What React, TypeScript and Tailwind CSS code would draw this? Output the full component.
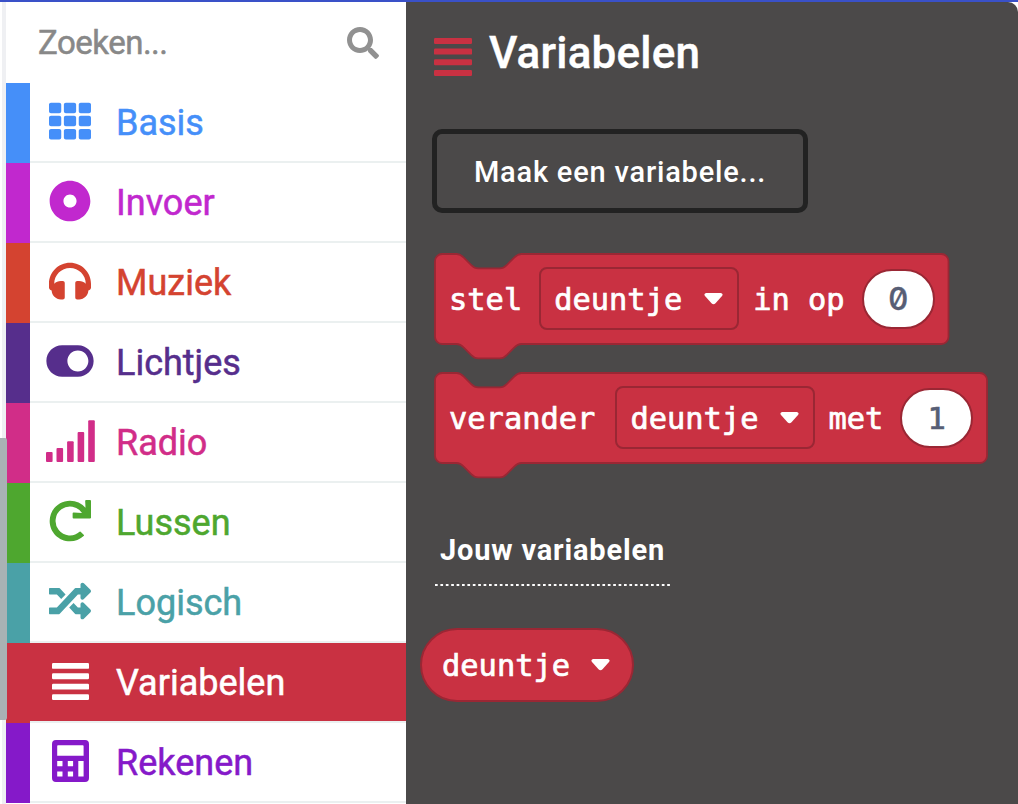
import type { ReactNode } from 'react';
import { FaDotCircle, FaRandom, FaRedo, FaSearch, FaTh, FaToggleOn } from 'react-icons/fa';

function BarsIcon({ className }: { className: string }) {
  return (
    <svg viewBox="0 0 38 38" className={className} fill="currentColor">
      <rect x="0" y="0" width="38" height="6" rx="1.2" />
      <rect x="0" y="10.6" width="38" height="6" rx="1.2" />
      <rect x="0" y="21.3" width="38" height="6" rx="1.2" />
      <rect x="0" y="32" width="38" height="6" rx="1.2" />
    </svg>
  );
}

function CalculatorIcon() {
  return (
    <svg viewBox="0 0 37 42" className="h-[42px] w-[37px]" fill="currentColor" fillRule="evenodd">
      <path d="M4 0H33a4 4 0 0 1 4 4V38a4 4 0 0 1-4 4H4a4 4 0 0 1-4-4V4a4 4 0 0 1 4-4ZM6 5.2a.8.8 0 0 0-.8.8V15.8h26.4V6a.8.8 0 0 0-.8-.8ZM5.2 21v5.3h5.3V21ZM15.8 21v5.3h5.3V21ZM26.3 21v15.6h5.3V21ZM5.2 31.5v5.1h5.3v-5.1ZM15.8 31.5v5.1h5.3v-5.1Z" />
    </svg>
  );
}

function HeadphonesIcon() {
  return (
    <svg viewBox="0 0 512 512" className="size-[42px]" fill="currentColor">
      <path d="M256 32C114.52 32 0 146.497 0 288v48a32 32 0 0 0 17.689 28.622l14.383 7.191C34.083 431.903 83.421 480 144 480h24c13.255 0 24-10.745 24-24V280c0-13.255-10.745-24-24-24h-24c-31.342 0-59.671 12.879-80 33.627V288c0-105.869 86.131-192 192-192s192 86.131 192 192v1.627C427.671 268.879 399.342 256 368 256h-24c-13.255 0-24 10.745-24 24v176c0 13.255 10.745 24 24 24h24c60.579 0 109.917-48.098 111.928-108.187l14.382-7.191A32 32 0 0 0 512 336v-48c0-141.479-114.496-256-256-256z" />
    </svg>
  );
}

function SignalIcon() {
  return (
    <svg viewBox="0 0 49 42" className="h-[42px] w-[49px]" fill="currentColor">
      <rect x="0" y="32" width="6.6" height="10" rx="1" />
      <rect x="10.5" y="28" width="6.6" height="14" rx="1" />
      <rect x="21.1" y="21.3" width="6.6" height="20.7" rx="1" />
      <rect x="31.6" y="12" width="6.6" height="30" rx="1" />
      <rect x="42.2" y="0.3" width="6.6" height="41.7" rx="1" />
    </svg>
  );
}

type Category = { name: string; bar: string; text: string; icon: ReactNode };

const categories: Category[] = [
  { name: 'Basis', bar: 'bg-[#458ff9]', text: 'text-[#458ff9]', icon: <FaTh className="size-[42px]" /> },
  { name: 'Invoer', bar: 'bg-[#c128ce]', text: 'text-[#c128ce]', icon: <FaDotCircle className="size-[42px]" /> },
  { name: 'Muziek', bar: 'bg-[#d44330]', text: 'text-[#d44330]', icon: <HeadphonesIcon /> },
  { name: 'Lichtjes', bar: 'bg-[#562e8c]', text: 'text-[#562e8c]', icon: <FaToggleOn className="h-[42px] w-[48px]" /> },
  { name: 'Radio', bar: 'bg-[#d12d88]', text: 'text-[#d12d88]', icon: <SignalIcon /> },
  { name: 'Lussen', bar: 'bg-[#4ea72f]', text: 'text-[#4ea72f]', icon: <FaRedo className="size-[42px]" /> },
  { name: 'Logisch', bar: 'bg-[#4aa1a7]', text: 'text-[#4aa1a7]', icon: <FaRandom className="size-[42px]" /> },
  { name: 'Variabelen', bar: 'bg-[#c93142]', text: 'bg-[#c93142] text-white', icon: <BarsIcon className="size-[37px]" /> },
  { name: 'Rekenen', bar: 'bg-[#8519c9]', text: 'text-[#8519c9]', icon: <CalculatorIcon /> },
];

function Arrow({ className }: { className: string }) {
  return (
    <svg viewBox="0 0 19 12" className={`h-[12px] w-[19px] shrink-0 ${className}`}>
      <path d="M2 0H17Q19.6 0.8 18 3L11.5 10.2Q9.5 12.2 7.5 10.2L1 3Q-0.6 0.8 2 0Z" fill="#fff" />
    </svg>
  );
}

function Word({ children, className = '' }: { children: ReactNode; className?: string }) {
  return (
    <span className={`mt-[2px] shrink-0 whitespace-pre font-['DejaVu_Sans_Mono',monospace] text-[30.4px] leading-[36px] text-white [-webkit-text-stroke:0.7px_white] ${className}`}>
      {children}
    </span>
  );
}

function Dropdown({ name }: { name: string }) {
  return (
    <div className="mb-[1px] flex h-[63px] w-[200px] shrink-0 items-center rounded-[8px] border-2 border-[#9a2734] pl-[13px]">
      <Word>{name}</Word>
      <Arrow className="ml-[21.5px] mt-[1px]" />
    </div>
  );
}

function NumberField({ value }: { value: string }) {
  return (
    <div className="flex h-[60px] w-[73px] shrink-0 items-center justify-center rounded-full border-2 border-[#9a2734] bg-white">
      {value === '0' ? (
        <span className="font-['Inter',sans-serif] text-[31px] font-medium leading-[36px] text-[#575e75] slashed-zero [-webkit-text-stroke:0.3px_#575e75]">0</span>
      ) : (
        <span className="mt-[1px] font-['DejaVu_Sans_Mono',monospace] text-[30.4px] leading-[36px] text-[#575e75] [-webkit-text-stroke:0.7px_#575e75]">{value}</span>
      )}
    </div>
  );
}

const NOTCH_RIGHT = 'c2 0 3 1 4 2l4 4c1 1 2 2 4 2h12c2 0 3 -1 4 -2l4 -4c1 -1 2 -2 4 -2';
const NOTCH_LEFT = 'c-2 0 -3 1 -4 2l-4 4c-1 1 -2 2 -4 2h-12c-2 0 -3 -1 -4 -2l-4 -4c-1 -1 -2 -2 -4 -2';

function StatementBlock({ width, children }: { width: number; children: ReactNode }) {
  const w = width / 1.8;
  const path = `M0 4A4 4 0 0 1 4 0H12${NOTCH_RIGHT}H${w - 4}A4 4 0 0 1 ${w} 4V46A4 4 0 0 1 ${w - 4} 50H48${NOTCH_LEFT}H4A4 4 0 0 1 0 46Z`;
  return (
    <div className="relative h-[90px]" style={{ width }}>
      <svg className="absolute left-0 top-0 overflow-visible" width={width} height="105">
        <path d={path} transform="scale(1.8)" fill="#c93142" stroke="#9a2734" strokeWidth="1" />
      </svg>
      <div className="relative flex h-[90px] items-center">{children}</div>
    </div>
  );
}

export default function App() {
  return (
    <div className="flex h-[804px] w-[1018px] flex-col overflow-hidden bg-white font-['Roboto',sans-serif]">
      <div className="h-[2px] shrink-0 bg-[#3a51c8]" />
      <div className="flex h-[802px]">
        <div className="relative flex w-[6px] shrink-0 justify-end">
          <div className="h-full w-[4px] bg-[#eff0f3]" />
          <div className="absolute left-0 top-[436px] z-10 h-[282px] w-[7px] rounded-r-[2px] bg-[#a9b2b4]" />
        </div>

        <nav className="w-[400px] shrink-0">
          <div className="flex h-[81px] items-center justify-between pl-[32px] pr-[27px]">
            <span className="mt-[1px] text-[33px] leading-[40px] tracking-[-0.5px] text-[#888888] [-webkit-text-stroke:0.5px_currentColor]">Zoeken...</span>
            <FaSearch className="mt-[1px] size-[32px] text-[#919191]" />
          </div>
          {categories.map((c) => (
            <div key={c.name} className="flex h-[80px]">
              <div className={`w-[24px] ${c.bar}`} />
              <div className={`flex flex-1 items-center border-b-2 border-[#ebf0f0] bg-clip-padding ${c.text}`}>
                <div className="mb-[2px] flex w-[80px] justify-center">{c.icon}</div>
                <span className="ml-[6px] mt-[2px] text-[36px] leading-[44px] [-webkit-text-stroke:0.5px_currentColor]">{c.name}</span>
              </div>
            </div>
          ))}
        </nav>

        <main className="w-[612px] shrink-0 rounded-tr-[10px] bg-[#4b4949]">
          <header className="flex h-[76px] items-center pl-[28px] pt-[26px] text-[#c93142]">
            <BarsIcon className="mt-[8px] size-[38px]" />
            <h1 className="ml-[17px] text-[44px] font-medium leading-[52px] tracking-[0.2px] text-white [-webkit-text-stroke:0.4px_white]">Variabelen</h1>
          </header>
          <div className="ml-[26px] mt-[51px] flex h-[84px] w-[376px] items-center justify-center rounded-[10px] border-[5px] border-[#222222]">
            <span className="mt-[2px] text-[29px] font-medium leading-[36px] tracking-[0.8px] text-white">Maak een variabele...</span>
          </div>

          <div className="ml-[29px] mt-[41px] flex flex-col gap-[29px]">
            <StatementBlock width={513.5}>
              <Word className="ml-[14px]">stel</Word>
              <div className="ml-[17px]"><Dropdown name="deuntje" /></div>
              <Word className="ml-[14px]">in op</Word>
              <div className="ml-[17px]"><NumberField value="0" /></div>
            </StatementBlock>
            <StatementBlock width={552}>
              <Word className="ml-[14px]">verander</Word>
              <div className="ml-[20px]"><Dropdown name="deuntje" /></div>
              <Word className="ml-[13px]">met</Word>
              <div className="ml-[17px]"><NumberField value="1" /></div>
            </StatementBlock>
          </div>

          <div className="ml-[29px] mt-[68px]">
            <h2 className="ml-[5px] text-[29px] font-bold leading-[38px] tracking-[0.82px] text-white">Jouw variabelen</h2>
            <svg className="mt-[15px] block h-[2px] w-[236px]">
              <line x1="0" y1="1" x2="236" y2="1" stroke="#fff" strokeWidth="2" strokeDasharray="2.7 2.7" />
            </svg>
          </div>
          <div className="ml-[14px] mt-[42px] flex h-[74px] w-[214px] items-center rounded-full border-2 border-[#9a2734] bg-[#c93142] pl-[20px]">
            <Word>deuntje</Word>
            <Arrow className="ml-[21px]" />
          </div>
        </main>
      </div>
    </div>
  );
}
